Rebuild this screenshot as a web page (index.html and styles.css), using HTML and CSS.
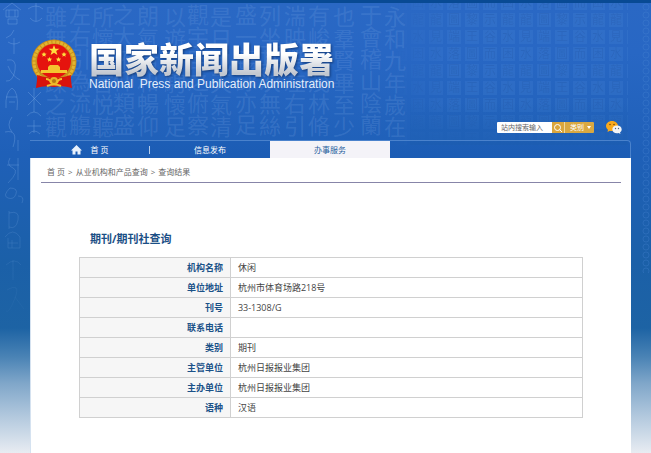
FILE: index.html
```
<!DOCTYPE html>
<html lang="zh-CN">
<head>
    <meta charset="utf-8">
    <title>国家新闻出版署</title>
    <link rel="stylesheet" href="styles.css">
</head>
<body>
<div class="page">
    <!-- calligraphy and type block backdrop -->
    <svg class="backdrop" aria-hidden="true">
        <defs>
            <linearGradient id="fadeRight" x1="0" x2="1" y1="0" y2="0">
                <stop offset="0" stop-color="#000"/>
                <stop offset="0.25" stop-color="#fff"/>
            </linearGradient>
            <linearGradient id="fadeDown" x1="0" x2="0" y1="0" y2="1">
                <stop offset="0.5" stop-color="#1f60b5" stop-opacity="0"/>
                <stop offset="1" stop-color="#1f60b5"/>
            </linearGradient>
            <linearGradient id="fadeSeal" x1="0" x2="0" y1="0" y2="1">
                <stop offset="0.4" stop-color="#fff"/>
                <stop offset="1" stop-color="#000"/>
            </linearGradient>
            <mask id="blockMask" maskUnits="userSpaceOnUse" x="392" y="0" width="236" height="150">
                <rect x="392" y="0" width="236" height="150" fill="url(#fadeRight)"/>
            </mask>
            <mask id="sealMask" maskUnits="userSpaceOnUse" x="0" y="0" width="45" height="340">
                <rect width="45" height="340" fill="url(#fadeSeal)"/>
            </mask>
            <pattern id="blocks" patternUnits="userSpaceOnUse" x="429" y="12" width="90" height="51">
                <g class="block">
                    <rect x="0" y="1" width="14" height="14"/><rect x="18" y="1" width="14" height="14"/><rect x="36" y="1" width="14" height="14"/><rect x="54" y="1" width="14" height="14"/><rect x="72" y="1" width="14" height="14"/>
                    <rect x="0" y="18" width="14" height="14"/><rect x="18" y="18" width="14" height="14"/><rect x="36" y="18" width="14" height="14"/><rect x="54" y="18" width="14" height="14"/><rect x="72" y="18" width="14" height="14"/>
                    <rect x="0" y="35" width="14" height="14"/><rect x="18" y="35" width="14" height="14"/><rect x="36" y="35" width="14" height="14"/><rect x="54" y="35" width="14" height="14"/><rect x="72" y="35" width="14" height="14"/>
                </g>
                <g class="block-text">
                    <text x="1" y="12">龍</text><text x="19" y="12">圖</text><text x="37" y="12">黎</text><text x="55" y="12">示</text><text x="73" y="12">龍</text>
                    <text x="1" y="29">見</text><text x="19" y="29">端</text><text x="37" y="29">王</text><text x="55" y="29">谷</text><text x="73" y="29">水</text>
                    <text x="1" y="46">水</text><text x="19" y="46">落</text><text x="37" y="46">圖</text><text x="55" y="46">而</text><text x="73" y="46">困</text>
                </g>
            </pattern>
            <pattern id="rings" patternUnits="userSpaceOnUse" x="641" y="3" width="10" height="8">
                <circle cx="5" cy="4" r="3" class="ring"/>
            </pattern>
        </defs>
        <g class="script">
            <text x="56" y="6">雖無静躁之觀</text>
            <text x="80" y="4">左右引為流觴</text>
            <text x="103" y="6">所懷悟言悦聽</text>
            <text x="124" y="4">之大俯仰類盛</text>
            <text x="148" y="5">朗氣清和暢仰</text>
            <text x="175" y="6">以遊目騁懷足</text>
            <text x="198" y="4">觀宇宙之俯察</text>
            <text x="221" y="6">是日也天氣清</text>
            <text x="246" y="4">盛一觴詠亦足</text>
            <text x="270" y="5">列坐其次無絲</text>
            <text x="295" y="5">湍映帶左右引</text>
            <text x="319" y="5">有峻領茂林脩</text>
            <text x="344" y="6">也羣賢畢至少</text>
            <text x="371" y="4">于會稽山陰蘭</text>
            <text x="395" y="6">永和九年歲在</text>
        </g>
        <g class="seal" mask="url(#sealMask)">
            <path d="M12 3l-9 7M12 3l9 7M6 10h12v7H6zM9 10v7M15 10v7M8 19h9v5H8zM14 30q-2 6-8 8M14 38v16M8 42q6 4 12 0M7 60q10-2 8 10t-9 11M8 66q4 10 12 14M12 88q-7 4-6 20M12 88q7 4 5 22M6 97h11M9 102h6M12 117q-6 8 0 15M5 132q14-3 8 15M18 140v11"/>
            <path d="M36 3v18M28 9q8-6 15 0M30 18q6 7 12 0M28 92l13 13M41 92l-13 13M34 88v24M27 116q7-8 14 0M34 120v13M27 126h14M29 134q5-6 11 0"/>
            <path d="M10 158q-4 7 3 10t-5 15M7 165h12M18 158v22M10 188q8 0 6 6t-8 4 2-10M18 196q7 0 4 7M9 211v18M9 213q11-3 9 7t-9 7M5 237q8-10 15 0v11H8v-10M12 240v8M8 243h10M6 265q9-8 15 0M13 260v20M7 290q14-8 8 8T6 311M15 297l9 12"/>
        </g>
        <rect x="392" y="3" width="236" height="142" fill="url(#blocks)" mask="url(#blockMask)"/>
        <rect x="410" y="60" width="218" height="85" fill="url(#fadeDown)"/>
        <rect x="641" y="3" width="10" height="270" fill="url(#rings)"/>
    </svg>

    <header class="header">
        <div class="brand">
            <svg class="emblem" viewBox="0 0 46 50" role="img" aria-label="国徽">
                <path d="M7 33L5 49q9-3 18-1q9-2 18 1l-2-16z" fill="#d9100d"/>
                <circle cx="23" cy="23" r="22.5" fill="#c98f1c"/>
                <circle cx="23" cy="23" r="20" fill="none" stroke="#e2b52f" stroke-width="3" stroke-dasharray="3 1"/>
                <circle cx="23" cy="22" r="17" fill="#e5130e"/>
                <path fill="#ffdf3e" d="M23 6l1.400 3.700h4l-3.200 2.400 1.200 3.900-3.400-2.300-3.400 2.300 1.200-3.900-3.200-2.400h4z"/>
                <path fill="#ffdf3e" d="M13 13l.8 1.600 1.800.1-1.400 1.200.5 1.800-1.700-1-1.600 1 .4-1.800-1.400-1.200 1.800-.1zM33 13l.8 1.600 1.800.1-1.400 1.200.5 1.800-1.700-1-1.600 1 .4-1.800-1.400-1.200 1.800-.1zM18.500 18l.8 1.600 1.800.1-1.400 1.200.5 1.800-1.700-1-1.600 1 .4-1.800-1.400-1.200 1.800-.1zM27.500 18l.8 1.600 1.800.1-1.400 1.200.5 1.800-1.700-1-1.600 1 .4-1.800-1.400-1.200 1.800-.1z"/>
                <path fill="#f4c52f" d="M17 28l2-2h8l2 2v3h7v3H10v-3h7z"/>
                <path d="M6 36q17 6 34 0l-1 11q-16-3-32 0z" fill="#d8130c"/>
                <circle cx="23" cy="42" r="4" fill="#e8b52a"/>
                <circle cx="23" cy="42" r="2" fill="#b87913"/>
                <path d="M15 40q4 0 5 4M31 40q-4 0-5 4M16 47q7-3 14 0" fill="none" stroke="#f1c02c" stroke-width="2"/>
            </svg>
            <div class="brand-text">
                <h1 class="brand-name">国家新闻出版署</h1>
                <p class="brand-en">National&nbsp; Press and Publication Administration</p>
            </div>
        </div>

        <div class="tools">
            <form class="search">
                <input class="search-input" type="text" placeholder="站内搜索输入" aria-label="站内搜索输入">
                <button class="search-button" type="button" aria-label="搜索">
                    <svg viewBox="0 0 10 10"><circle cx="4.500" cy="4.500" r="3"/><path d="M6.800 6.800L9 9"/></svg>
                </button>
                <div class="search-type">
                    <select aria-label="类别"><option>类别</option></select>
                    <svg class="arrow" viewBox="0 0 4 3"><path d="M0 0h4L2 3z"/></svg>
                </div>
            </form>
            <a class="wechat" href="#" aria-label="微信">
                <svg viewBox="0 0 16 13">
                    <path fill="#f9a91c" d="M6 0C2.700 0 0 2.200 0 5c0 1.500.8 2.800 2 3.700L1.500 11l2.400-1.300C8 10.500 12 8.500 12 5c0-2.800-2.700-5-6-5z"/>
                    <circle cx="4" cy="3.500" r=".8" fill="#7a4d08"/><circle cx="8" cy="3.500" r=".8" fill="#7a4d08"/>
                    <path fill="#f2f3f5" d="M11 4.500c-2.700 0-4.700 1.700-4.700 3.900s2 3.900 4.700 3.900c.6 0 1.100-.1 1.600-.2l1.900.9-.5-1.600c1-.8 1.700-1.800 1.700-3 0-2.200-2-3.900-4.700-3.900z"/>
                    <circle cx="9.500" cy="7.500" r=".7" fill="#567"/><circle cx="12.500" cy="7.500" r=".7" fill="#567"/>
                </svg>
            </a>
        </div>
    </header>

    <div class="wrap">
        <nav class="nav">
            <a class="nav-item" href="#">
                <svg class="home" viewBox="0 0 11 10"><path d="M5.500 0L0 5.500h1.500V9.500h3V6.500h2v3h3v-4H11z"/></svg>
                首 页
            </a>
            <a class="nav-item" href="#">信息发布</a>
            <a class="nav-item active" href="#">办事服务</a>
        </nav>

        <main class="content">
            <div class="crumbs">
                <a href="#">首 页</a>
                <span>&gt;</span>
                <a href="#">从业机构和产品查询</a>
                <span>&gt;</span>
                <a href="#">查询结果</a>
            </div>
            <section class="result">
                <h2 class="result-title">期刊/期刊社查询</h2>
                <table class="result-table">
                    <tbody>
                        <tr><th scope="row">机构名称</th><td>休闲</td></tr>
                        <tr><th scope="row">单位地址</th><td>杭州市体育场路218号</td></tr>
                        <tr><th scope="row">刊号</th><td>33-1308/G</td></tr>
                        <tr><th scope="row">联系电话</th><td></td></tr>
                        <tr><th scope="row">类别</th><td>期刊</td></tr>
                        <tr><th scope="row">主管单位</th><td>杭州日报报业集团</td></tr>
                        <tr><th scope="row">主办单位</th><td>杭州日报报业集团</td></tr>
                        <tr><th scope="row">语种</th><td>汉语</td></tr>
                    </tbody>
                </table>
            </section>
        </main>
    </div>
</div>
</body>
</html>
```
FILE: styles.css
```
* {
    box-sizing: border-box;
}
body {
    margin: 0;
    font-family: "Open Sans", "Noto Sans CJK SC", sans-serif;
    font-size: 8px;
    color: #444;
}
a {
    color: inherit;
    text-decoration: none;
}
.page {
    position: relative;
    display: flex;
    flex-direction: column;
    min-height: 100vh;
    border-top: 3px solid #084a94;
    background: #e8ecf2 linear-gradient(#2a68c4 0, #2867c4 50px, #1f60b8 150px, #1b60a8 260px, #1d63a4 325px, #4a83b5 354px, #7fa6c9 380px, #b3c9de 414px, #e8ecf2 450px) no-repeat;
}

/* backdrop */
.backdrop {
    position: absolute;
    top: -3px;
    left: 0;
    width: 100%;
    height: 340px;
    pointer-events: none;
}
.script text {
    font-family: "Noto Sans CJK TC", sans-serif;
    font-size: 22px;
    font-weight: 400;
    writing-mode: vertical-rl;
    fill: #8fb8f0;
    fill-opacity: 0.18;
}
.seal path {
    fill: none;
    stroke: #8fb8f0;
    stroke-opacity: 0.3;
    stroke-width: 1;
}
.block rect {
    fill: #5590e0;
    fill-opacity: 0.18;
}
.block-text text {
    font-family: "Noto Sans CJK TC", sans-serif;
    font-size: 12px;
    fill: #1c4f9c;
    fill-opacity: 0.25;
}
.ring {
    fill: none;
    stroke: #4a86d4;
    stroke-opacity: 0.3;
}

/* header */
.header {
    position: relative;
    padding: 36px 29px 0 31px;
}
.brand {
    display: flex;
    align-items: flex-start;
    gap: 12px;
}
.emblem {
    width: 46px;
    height: 50px;
}
.brand-name {
    margin: 0;
    font-family: "Noto Sans CJK SC", sans-serif;
    font-size: 35px;
    font-weight: 900;
    line-height: 38px;
    color: transparent;
    background: linear-gradient(#fff 40%, #c3c8d0 90%);
    -webkit-background-clip: text;
    background-clip: text;
    filter: drop-shadow(1px 1px 1px rgba(10, 40, 90, 0.7));
}
.brand-en {
    margin: 0;
    font-family: "Liberation Sans", sans-serif;
    font-size: 12px;
    line-height: 14px;
    color: #e4eefb;
}
.tools {
    display: flex;
    justify-content: flex-end;
    align-items: center;
    gap: 12px;
    height: 13px;
    margin-top: 30px;
}
.search {
    display: flex;
    height: 11px;
    border-radius: 1px;
    overflow: hidden;
}
.search-input {
    width: 55px;
    padding: 0 4px;
    border: 0;
    background: #fff;
    font: 7px/11px "Noto Sans CJK SC", sans-serif;
    color: #555;
}
.search-input::placeholder {
    color: #666;
}
.search-button {
    width: 13px;
    padding: 0 1px;
    border: 0;
    border-right: 1px solid #f0d79a;
    background: #dba63c;
}
.search-button svg {
    display: block;
    width: 10px;
    height: 10px;
    fill: none;
    stroke: #fff;
}
.search-type {
    display: flex;
    align-items: center;
    width: 29px;
    padding-left: 5px;
    gap: 2px;
    background: #d9a841;
}
.search-type select {
    appearance: none;
    width: 15px;
    padding: 0;
    border: 0;
    background: none;
    font: 7px/11px "Noto Sans CJK SC", sans-serif;
    color: #fff;
}
.arrow {
    width: 4px;
    height: 3px;
    fill: #fff;
}
.wechat svg {
    display: block;
    width: 16px;
    height: 13px;
}

/* navigation */
.wrap {
    position: relative;
    display: flex;
    flex: 1;
    flex-direction: column;
    margin: 6px 20px 0 30px;
}
.nav {
    display: flex;
    height: 18px;
    border-top: 1px solid #4a82cc;
    border-right: 1px solid #4a82cc;
    border-radius: 0 4px 0 0;
    background: rgba(20, 85, 170, 0.2);
}
.nav-item {
    position: relative;
    display: flex;
    align-items: center;
    justify-content: center;
    gap: 8px;
    width: 120px;
    color: #fff;
}
.nav-item:first-child::after {
    content: "";
    position: absolute;
    right: 0;
    width: 1px;
    height: 8px;
    background: #b5cdec;
}
.nav-item.active {
    background: #f4f3f8;
    color: #2a5f9e;
}
.home {
    width: 11px;
    height: 10px;
    fill: #e8f1fc;
}

/* content */
.content {
    flex: 1;
    padding: 0 10px 35px;
    background: #fff;
    border-left: 1px solid #d5e2f0;
}
.crumbs {
    display: flex;
    gap: 3px;
    padding: 8px 6px 4px;
    border-bottom: 1px solid #8785a8;
    line-height: 12px;
    color: #666;
}
.result {
    padding: 48px 38px 0;
}
.result-title {
    margin: 0 0 10px;
    padding-left: 11px;
    font-size: 11px;
    line-height: 16px;
    color: #1b4f85;
}
.result-table {
    width: 100%;
    border-collapse: collapse;
    table-layout: fixed;
    font-size: 9px;
    line-height: 19px;
}
.result-table th,
.result-table td {
    height: 20px;
    padding: 0 7px;
    border: 1px solid #d0d0d0;
    text-align: left;
}
.result-table th {
    width: 30%;
    background: #f6f6f6;
    text-align: right;
    color: #1b5288;
}
```
